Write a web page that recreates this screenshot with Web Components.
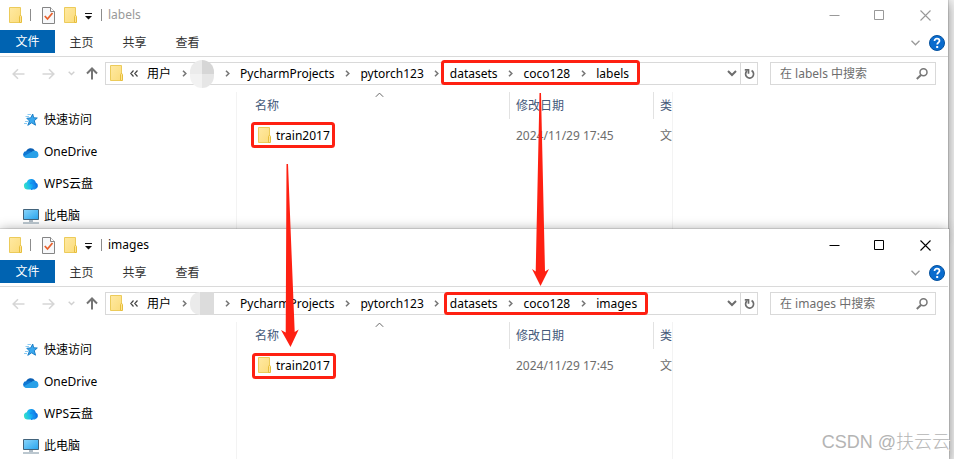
<!DOCTYPE html>
<html lang="zh-CN">
<head>
<meta charset="utf-8">
<title>labels / images</title>
<style>
  html, body { height: 100%; }
  body { margin: 0; overflow: hidden; background: #f4f4f4; font: 12px/16px "Noto Sans", "Noto Sans CJK SC", sans-serif; color: #000; }
</style>
</head>
<body>
<desktop-view>
  <explorer-window name="labels" inactive></explorer-window>
  <explorer-window name="images"></explorer-window>
  <desktop-markup slot="over"></desktop-markup>
  <water-mark slot="over">CSDN @扶云云</water-mark>
</desktop-view>
<script>
const ICONS = {
  folder: [13, 17, `<defs><linearGradient id="f" x1="0" y1="0" x2="1" y2="1"><stop offset="0" stop-color="#ffe9a2"/><stop offset="1" stop-color="#fbdc7c"/></linearGradient></defs><path d="M.5.5h11v15h-11z" fill="url(#f)" stroke="#eccb5a"/><path d="M10.500 9.500q.2-1 1-1t1 1v6h-2z" fill="#ffe392" stroke="#e6be3c"/>`],
  doc: [13, 17, `<path d="M.5.5h8l4 4v12h-12z" fill="#f7f8fa" stroke="#858585"/><path d="M8.500.5v4h4" fill="#fff" stroke="#858585"/><path d="M2.800 9l2.700 3 5-6" fill="none" stroke="#e8602c" stroke-width="1.800"/>`],
  drop: [7, 7, `<path d="M0 0h7v1H0zM0 3h7L3.500 6.500z" fill="#111"/>`],
  min: [11, 11, `<path d="M.5 5.500h10" stroke="currentColor"/>`],
  max: [11, 11, `<path d="M.5.500h9v9h-9z" fill="none" stroke="currentColor"/>`],
  close: [11, 11, `<path d="M.5.500l10 10M10.500.500l-10 10" stroke="currentColor" stroke-width="1.100"/>`],
  expand: [9, 6, `<path d="M.5.800l4 4 4-4" fill="none" stroke="#9a9a9a" stroke-width="1.300"/>`],
  help: [16, 16, `<circle cx="8" cy="8" r="7.500" fill="#0a6cce" stroke="#06529e"/><path d="M5.500 6q0-2.300 2.500-2.300T10.500 6c0 1.500-2.300 1.500-2.300 3.400" fill="none" stroke="#fff" stroke-width="1.700"/><path d="M7.200 11h2v2h-2z" fill="#fff"/>`],
  back: [13, 12, `<path d="M12.500 6H1.200M6 1.200L1.200 6 6 10.800" fill="none" stroke="#d6d6d6" stroke-width="1.600"/>`],
  forward: [13, 12, `<path d="M.5 6h11.300M7 1.200L11.800 6 7 10.800" fill="none" stroke="#d6d6d6" stroke-width="1.600"/>`],
  recent: [7, 5, `<path d="M.7.700l2.800 2.800L6.300.700" fill="none" stroke="#d0d0d0" stroke-width="1.400"/>`],
  up: [12, 13, `<path d="M6 12.500V1.500M1 6.500l5-5 5 5" fill="none" stroke="#747474" stroke-width="2"/>`],
  more: [8, 7, `<path d="M3.500.5l-2.700 3 2.700 3M7.500.5l-2.700 3 2.700 3" fill="none" stroke="#444" stroke-width="1.200"/>`],
  sep: [5, 7, `<path d="M1 .7l2.800 2.800L1 6.300" fill="none" stroke="#777" stroke-width="1.600"/>`],
  history: [10, 7, `<path d="M1 1l4 4 4-4" fill="none" stroke="#6c6c6c" stroke-width="2"/>`],
  refresh: [11, 12, `<path d="M7.600 2.600a4 4 0 1 1-4.600.4" fill="none" stroke="#6c6c6c" stroke-width="1.700"/><path d="M.8 1.800h3.700v4" fill="none" stroke="#6c6c6c" stroke-width="1.700"/>`],
  search: [12, 12, `<circle cx="7.500" cy="4.300" r="3.500" fill="none" stroke="#777" stroke-width="1.500"/><path d="M5 7L.8 11" stroke="#777" stroke-width="2"/>`],
  sort: [9, 6, `<path d="M.8 4.800l3.700-3.700 3.700 3.700" fill="none" stroke="#666"/>`],
  star: [16, 14, `<path d="M9.700 1l1 3.800 3.600.2-3 2.700 1.200 4.500-3.800-2.400-3.900 2.500 1.700-4.300L3.800 5.300l3.900-.4z" fill="#3aa8ee" stroke="#1b7fc8"/><path d="M4.500 1.500H8M2.500 3.500H6M2 8.500h3.500M1 10.500h3" stroke="#8cccf3"/>`],
  onedrive: [16, 11, `<path d="M3 5a4.800 4.800 0 0 1 8.800-1.500L9 7 2.500 7z" fill="#0a5fb4"/><path d="M4 4.500q2-1.200 4 .2L13.500 9 2.500 10.500A2.900 2.900 0 0 1 4 4.500z" fill="#0f78d4"/><path d="M8 5.200q1.500-1.900 4-1.400a3.500 3.500 0 0 1 3.300 3.200c.7 1.700-.5 4-2.800 4H3.500q-1.800 0-2.800-1.700z" fill="#28a0e8"/>`],
  wps: [16, 12, `<defs><linearGradient id="w" x1="0" y1=".7" x2="1" y2=".5"><stop offset="0" stop-color="#36e3c5"/><stop offset=".45" stop-color="#18b5f4"/><stop offset="1" stop-color="#0a63e0"/></linearGradient></defs><path d="M4.800 11.500a3.700 3.700 0 0 1-1-7.300 4.700 4.700 0 0 1 9 .3 3.700 3.700 0 0 1-1 7z" fill="url(#w)"/><path d="M7 5.500q3-1.500 4 1.500t-3 4.500" fill="none" stroke="#168df0" stroke-width="1.500"/>`],
  computer: [16, 15, `<defs><linearGradient id="c" x1="0" y1="0" x2="1" y2="1"><stop offset="0" stop-color="#8cd6fb"/><stop offset="1" stop-color="#26a4ee"/></linearGradient></defs><path d="M.5.500h15v10H.5z" fill="url(#c)" stroke="#42637b"/><path d="M6 11h4v2H6z" fill="#aebbc5"/><path d="M0 14h16" stroke="#7890a0"/>`]
};

class Base extends HTMLElement {
  connectedCallback() {
    if (!this.shadowRoot) this.attachShadow({ mode: "open" }).innerHTML = this.render();
  }
}

customElements.define("ui-icon", class extends Base {
  render() {
    const [w, h, body] = ICONS[this.getAttribute("name")];
    return `<style>:host{display:inline-flex;flex:none}svg{display:block}</style>
      <svg width="${w}" height="${h}" viewBox="0 0 ${w} ${h}" aria-hidden="true">${body}</svg>`;
  }
});

const RESET = `:host,*{box-sizing:border-box}button{font:inherit;color:inherit;background:none;border:0;padding:0;margin:0;display:flex;align-items:center;justify-content:center}`;

customElements.define("title-bar", class extends Base {
  render() {
    return `<style>${RESET}
      :host{display:flex;align-items:center;height:30px;padding-left:9px;color:var(--title)}
      .quick{display:flex;align-items:center}
      i{width:1px;height:12px;background:#8c8c8c;margin:0 11px 0 8px}
      .doc{margin-right:9px}.drop{margin:2px 9px 0 8px}
      i.last{margin:0 6px 0 0}
      h1{flex:1;margin:0;font:inherit}
      .ctl button{width:46px;height:28px}.ctl{display:flex;color:var(--control)}
      .ctl button + button{margin-left:-1px}.ctl button:last-child{margin-left:0}
      </style>
      <div class="quick"><ui-icon name="folder"></ui-icon><i></i>
      <button class="doc" aria-label="属性"><ui-icon name="doc"></ui-icon></button>
      <button aria-label="新建文件夹"><ui-icon name="folder"></ui-icon></button>
      <button class="drop" aria-label="自定义"><ui-icon name="drop"></ui-icon></button><i class="last"></i></div>
      <h1><slot></slot></h1>
      <div class="ctl"><button aria-label="最小化"><ui-icon name="min"></ui-icon></button><button aria-label="最大化"><ui-icon name="max"></ui-icon></button><button aria-label="关闭"><ui-icon name="close"></ui-icon></button></div>`;
  }
});

customElements.define("ribbon-tabs", class extends Base {
  render() {
    return `<style>${RESET}
      :host{display:flex;height:27px;padding-right:3px;border-bottom:1px solid #dadada;color:#333}
      button{width:53px;height:25px}
      .file{width:55px;height:23px;background:#0063b1;color:#fff;padding-top:1px}
      .end{margin-left:auto;width:auto;margin-right:9px}.help{width:auto}
      </style>
      <button class="file">文件</button><button>主页</button><button>共享</button><button>查看</button>
      <button class="end" aria-label="展开功能区"><ui-icon name="expand"></ui-icon></button>
      <button class="help" aria-label="帮助"><ui-icon name="help"></ui-icon></button>`;
  }
});

customElements.define("address-row", class extends Base {
  render() {
    const name = this.getAttribute("name");
    const crumbs = ["PycharmProjects", "pytorch123", "datasets", "coco128", name];
    return `<style>${RESET}
      :host{display:flex;align-items:center;height:35px;padding:5px 12px 7px 12px}
      .nav{display:flex;align-items:center;width:93px;flex:none}
      .nav button:nth-child(2){margin-left:17px}.nav button:nth-child(3){margin-left:13px}.nav button:nth-child(4){margin-left:11px}
      .path{display:flex;flex:1;min-width:0;height:23px;border:1px solid #d9d9d9;align-items:center;padding-left:4px}
      .path button{flex:none}.more{margin:0 9px 0 7px}
      .path ui-icon.sep{width:26px;justify-content:center}
      .hidden{width:17px;height:var(--mosaic-height);flex:none;position:relative}
      .hidden::before{content:"";position:absolute;inset:0 0 0 -7px;border-radius:var(--mosaic-radius);background:var(--mosaic)}
      .path .history{margin-left:auto;width:17px}
      .refresh{width:17px;height:21px;border-left:1px solid #d9d9d9}
      label{display:flex;align-items:center;width:166px;height:23px;margin-left:12px;border:1px solid #d9d9d9;padding:0 7px 0 9px;flex:none}
      input{flex:1;min-width:0;border:0;padding:0;background:none;font:inherit;color:#6d6d6d;outline:0}
      input::placeholder{color:#6d6d6d;opacity:1}
      </style>
      <div class="nav"><button aria-label="后退"><ui-icon name="back"></ui-icon></button><button aria-label="前进"><ui-icon name="forward"></ui-icon></button><button aria-label="最近"><ui-icon name="recent"></ui-icon></button><button aria-label="向上"><ui-icon name="up"></ui-icon></button></div>
      <div class="path"><ui-icon name="folder"></ui-icon><button class="more" aria-label="更多"><ui-icon name="more"></ui-icon></button>
      <button>用户</button><ui-icon class="sep" name="sep"></ui-icon><span class="hidden"></span>
      ${crumbs.map(c => `<ui-icon class="sep" name="sep"></ui-icon><button>${c}</button>`).join("")}
      <button class="history" aria-label="历史"><ui-icon name="history"></ui-icon></button><button class="refresh" aria-label="刷新"><ui-icon name="refresh"></ui-icon></button></div>
      <label><input type="text" aria-label="搜索" placeholder="在 ${name} 中搜索"><ui-icon name="search"></ui-icon></label>`;
  }
});

customElements.define("side-nav", class extends Base {
  render() {
    const items = [["star", "快速访问"], ["onedrive", "OneDrive"], ["wps", "WPS云盘"], ["computer", "此电脑"]];
    return `<style>${RESET}
      :host{display:block;width:237px;flex:none;padding:12px 0 0 23px;border-right:1px solid #f3f3f3}
      a{display:flex;align-items:center;gap:5px;height:32px;color:#000;text-decoration:none}
      </style>${items.map(([i, t]) => `<a href="#"><ui-icon name="${i}"></ui-icon>${t}</a>`).join("")}`;
  }
});

customElements.define("file-list", class extends Base {
  render() {
    return `<style>${RESET}
      :host{display:block;width:436px;flex:none;border-right:1px solid #f3f3f3;overflow:hidden}
      table{table-layout:fixed;width:100%;border-collapse:separate;border-spacing:0}
      col.n{width:273px}col.d{width:144px}
      th,td{padding:0 0 0 6px;text-align:left;font-weight:400;white-space:nowrap;overflow:hidden}
      th{height:27px;color:#44597a;position:relative;border-right:1px solid #e2e2e2}th:last-child{border:0}
      td{height:33px;color:#6d6d6d}
      th:first-child{padding-left:18px}td:first-child{padding-left:21px;color:#000}
      th ui-icon{position:absolute;top:0;left:138px}
      .file{display:flex;align-items:center;gap:5px}
      </style>
      <table><colgroup><col class="n"><col class="d"><col></colgroup>
      <thead><tr><th>名称<ui-icon name="sort"></ui-icon></th><th>修改日期</th><th>类</th></tr></thead>
      <tbody><tr><td><span class="file"><ui-icon name="folder"></ui-icon>train2017</span></td><td>2024/11/29 17:45</td><td>文</td></tr></tbody></table>`;
  }
});

customElements.define("explorer-window", class extends Base {
  render() {
    const name = this.getAttribute("name");
    return `<style>
      :host{display:block;position:relative;background:#fff;margin-right:5px;margin-top:-3px;padding:1px 1px 0 0;box-shadow:0 0 0 1px rgba(0,0,0,.1),0 2px 12px rgba(0,0,0,.45);--title:#000;--control:#000;
        --mosaic:linear-gradient(90deg,#ebebeb 42%,#dcdcdc 42%);--mosaic-height:23px;--mosaic-radius:10px 0 0 10px}
      :host([inactive]){margin:0 6px 0 0;padding:0;--title:#999;--control:#999;
        --mosaic:conic-gradient(#d6d6d6 25%,#e6e6e6 0 50%,#f2f2f2 0 75%,#ebebeb 0);--mosaic-height:28px;--mosaic-radius:12px}
      .body{display:flex}
      </style>
      <title-bar>${name}</title-bar><ribbon-tabs></ribbon-tabs><address-row name="${name}"></address-row>
      <div class="body"><side-nav></side-nav><file-list></file-list></div>`;
  }
});

customElements.define("desktop-markup", class extends Base {
  render() {
    return `<style>:host{position:absolute;inset:0;pointer-events:none}svg{display:block;width:100%;height:100%}</style>
      <svg aria-hidden="true"><g fill="none" stroke="#fe2012" stroke-width="3">
      <rect x="442.500" y="61.500" width="196" height="22" rx="2"/><rect x="252.500" y="123.500" width="81" height="23" rx="2"/>
      <rect x="445.500" y="293.500" width="201" height="20" rx="2"/><rect x="253.500" y="354.500" width="81" height="23" rx="2"/></g>
      <g fill="#fe2012"><path d="M286.500 164h1.500L294.700 332l4-2.500L290.500 347 281 330l4.700 2.500z"/>
      <path d="M539.500 93h1.500L545 271.500l4-2.500L540.500 286 532 269l3.700 2.500z"/></g></svg>`;
  }
});

customElements.define("water-mark", class extends Base {
  render() {
    return `<style>:host{position:absolute;right:4px;bottom:5px;font:300 18px/24px "Liberation Sans","Noto Sans CJK SC",sans-serif;color:#b4b4b4;text-shadow:1px 1px 0 #fff}</style><slot></slot>`;
  }
});

customElements.define("desktop-view", class extends Base {
  render() {
    return `<style>:host{display:block;position:relative;height:100%;overflow:hidden}</style><slot></slot><slot name="over"></slot>`;
  }
});
</script>
</body>
</html>
